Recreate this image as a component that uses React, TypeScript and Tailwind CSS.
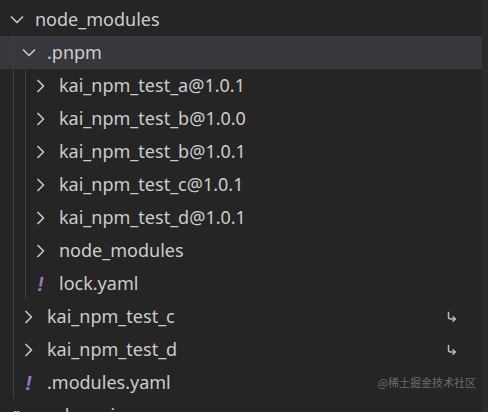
import React from "react";

type Item = {
  name: string;
  depth: number;
  kind: "open" | "closed" | "yaml" | "js";
  active?: boolean;
  link?: boolean;
};

const items: Item[] = [
  { name: "node_modules", depth: 0, kind: "open" },
  { name: ".pnpm", depth: 1, kind: "open", active: true },
  { name: "kai_npm_test_a@1.0.1", depth: 2, kind: "closed" },
  { name: "kai_npm_test_b@1.0.0", depth: 2, kind: "closed" },
  { name: "kai_npm_test_b@1.0.1", depth: 2, kind: "closed" },
  { name: "kai_npm_test_c@1.0.1", depth: 2, kind: "closed" },
  { name: "kai_npm_test_d@1.0.1", depth: 2, kind: "closed" },
  { name: "node_modules", depth: 2, kind: "closed" },
  { name: "lock.yaml", depth: 2, kind: "yaml" },
  { name: "kai_npm_test_c", depth: 1, kind: "closed", link: true },
  { name: "kai_npm_test_d", depth: 1, kind: "closed", link: true },
  { name: ".modules.yaml", depth: 1, kind: "yaml" },
  { name: "package.json", depth: 0, kind: "js" },
];

function Icon({ kind }: { kind: Item["kind"] }) {
  if (kind === "open")
    return (
      <svg width="16" height="16" viewBox="0 0 16 16" fill="none">
        <path d="M2.5 5 L8 10.5 L13.5 5" stroke="#c5c5c5" strokeWidth="1.7" strokeLinecap="round" strokeLinejoin="round" />
      </svg>
    );
  if (kind === "closed")
    return (
      <svg width="16" height="16" viewBox="0 0 16 16" fill="none">
        <path d="M5 2.5 L10.5 8 L5 13.5" stroke="#c5c5c5" strokeWidth="1.7" strokeLinecap="round" strokeLinejoin="round" />
      </svg>
    );
  if (kind === "yaml")
    return (
      <span className="text-[20px] font-bold italic leading-none text-[#a074c4] [font-family:'Liberation_Sans',sans-serif]">
        !
      </span>
    );
  return <span className="text-[13px] font-bold leading-none text-[#b8c938]">{"{}"}</span>;
}

function LinkIcon() {
  return (
    <svg width="12" height="12" viewBox="0 0 12 12" fill="none">
      <path d="M2.5 1.5 V6 Q2.5 8 4.5 8 H9" stroke="#bdbdbd" strokeWidth="1.5" strokeLinecap="round" />
      <path d="M7 5.8 L9.3 8 L7 10.2" stroke="#bdbdbd" strokeWidth="1.5" strokeLinecap="round" strokeLinejoin="round" />
    </svg>
  );
}

function Row({ item, guides }: { item: Item; guides: number }) {
  return (
    <div
      className={`flex h-[33px] shrink-0 items-stretch ${item.active ? "bg-[#37373d]" : ""}`}
    >
      <div className="w-[6px] shrink-0" />
      {Array.from({ length: guides }).map((_, i) => (
        <div key={i} className="w-[12px] shrink-0">
          <div className="ml-[7px] h-full border-l border-[#3f3f42]" />
        </div>
      ))}
      {Array.from({ length: item.depth - guides }).map((_, i) => (
        <div key={"s" + i} className="w-[12px] shrink-0" />
      ))}
      <div className="flex w-[21px] shrink-0 items-center justify-center">
        <Icon kind={item.kind} />
      </div>
      <div className="ml-[8px] flex flex-1 items-center text-[18px] text-[#cccccc]">
        {item.name}
      </div>
      {item.link && (
        <div className="mr-[24px] flex items-center">
          <LinkIcon />
        </div>
      )}
    </div>
  );
}

export default function App() {
  return (
    <div
      className="flex h-[412px] w-[488px] overflow-hidden bg-[#252526]"
      style={{ fontFamily: "'Noto Sans', 'Open Sans', sans-serif" }}
    >
      <div className="relative flex w-[482px] flex-col pt-[3px]">
        {items.map((it, i) => {
          const guides = it.depth === 2 && i <= 8 ? 2 : it.depth >= 1 ? 1 : 0;
          return <Row key={i} item={it} guides={Math.min(guides, it.depth)} />;
        })}
        <div className="absolute right-[6px] top-[374px] text-[11px] text-[#6b6b6b] [font-family:'Noto_Sans_CJK_SC',sans-serif]">
          @稀土掘金技术社区
        </div>
      </div>
      <div className="w-[6px] bg-[#2b2b2b]" />
    </div>
  );
}
